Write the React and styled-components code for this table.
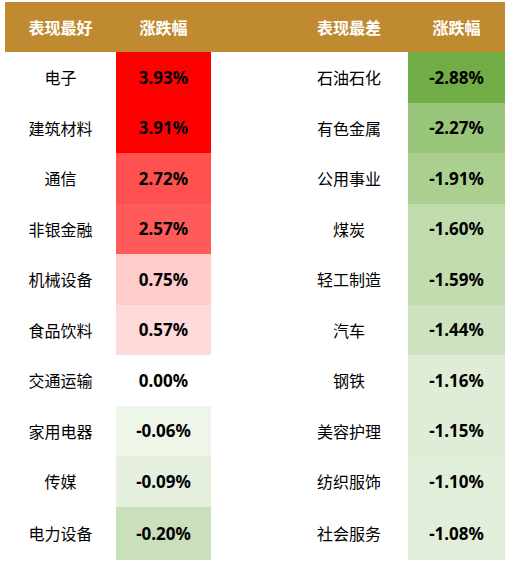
import React from "react";
import styled, { createGlobalStyle } from "styled-components";

const GlobalStyle = createGlobalStyle`
  html, body {
    margin: 0;
    padding: 0;
    background: #ffffff;
  }
`;

const best = [
  { name: "电子", value: "3.93%", bg: "#ff0000" },
  { name: "建筑材料", value: "3.91%", bg: "#ff0000" },
  { name: "通信", value: "2.72%", bg: "#ff5050" },
  { name: "非银金融", value: "2.57%", bg: "#ff5b5b" },
  { name: "机械设备", value: "0.75%", bg: "#ffcccc" },
  { name: "食品饮料", value: "0.57%", bg: "#ffdada" },
  { name: "交通运输", value: "0.00%", bg: "#ffffff" },
  { name: "家用电器", value: "-0.06%", bg: "#eef5e9" },
  { name: "传媒", value: "-0.09%", bg: "#e4efdd" },
  { name: "电力设备", value: "-0.20%", bg: "#c9e0bb" },
];

const worst = [
  { name: "石油石化", value: "-2.88%", bg: "#70ad47" },
  { name: "有色金属", value: "-2.27%", bg: "#9ac67b" },
  { name: "公用事业", value: "-1.91%", bg: "#aacf8f" },
  { name: "煤炭", value: "-1.60%", bg: "#c0dcad" },
  { name: "轻工制造", value: "-1.59%", bg: "#c1dcae" },
  { name: "汽车", value: "-1.44%", bg: "#cde3bf" },
  { name: "钢铁", value: "-1.16%", bg: "#dfedd6" },
  { name: "美容护理", value: "-1.15%", bg: "#dfedd6" },
  { name: "纺织服饰", value: "-1.10%", bg: "#e1eed9" },
  { name: "社会服务", value: "-1.08%", bg: "#e2eeda" },
];

const Table = styled.div`
  margin: 2px 0 0 5px;
  width: 500px;
  display: grid;
  grid-template-columns: 111px 95px 79px 118px 97px;
  grid-template-rows: 50px repeat(9, 50.5px) 53px;
  font-family: "Noto Sans CJK SC", "Noto Sans", sans-serif;
  color: #000000;
`;

const HeadCell = styled.div`
  background: #bf8a30;
  color: #ffffff;
  font-weight: 700;
  font-size: 16px;
  display: flex;
  align-items: center;
  justify-content: center;
`;

const NameCell = styled.div`
  display: flex;
  align-items: center;
  justify-content: center;
  font-size: 16px;
`;

const ValueCell = styled.div`
  display: flex;
  align-items: center;
  justify-content: center;
  font-family: "Noto Sans", "Noto Sans CJK SC", sans-serif;
  font-size: 17px;
  font-weight: 700;
  background: ${(p) => p.$bg};
`;

const Spacer = styled.div``;

export default function App() {
  return (
    <>
      <GlobalStyle />
      <Table>
        <HeadCell>表现最好</HeadCell>
        <HeadCell>涨跌幅</HeadCell>
        <HeadCell />
        <HeadCell>表现最差</HeadCell>
        <HeadCell>涨跌幅</HeadCell>
        {best.map((b, i) => (
          <React.Fragment key={b.name}>
            <NameCell>{b.name}</NameCell>
            <ValueCell $bg={b.bg}>{b.value}</ValueCell>
            <Spacer />
            <NameCell>{worst[i].name}</NameCell>
            <ValueCell $bg={worst[i].bg}>{worst[i].value}</ValueCell>
          </React.Fragment>
        ))}
      </Table>
    </>
  );
}
